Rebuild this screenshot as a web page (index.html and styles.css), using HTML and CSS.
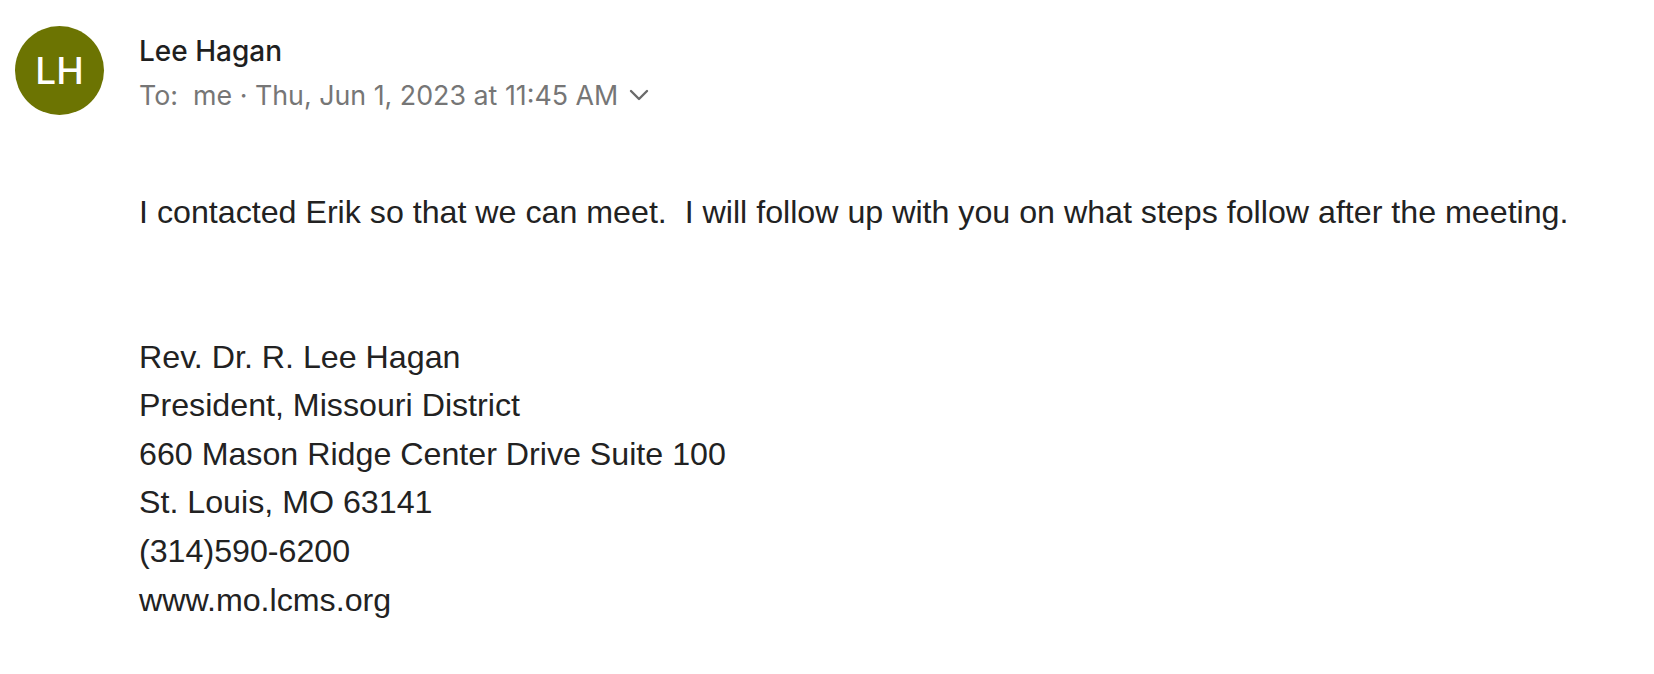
FILE: index.html
```html
<!DOCTYPE html>
<html lang="en">
<head>
<meta charset="utf-8">
<title>Lee Hagan</title>
<link rel="stylesheet" href="styles.css">
</head>
<body>
<div class="message">
  <header class="header">
    <div class="avatar">LH</div>
    <div class="meta">
      <div class="sender">Lee Hagan</div>
      <div class="recipients">
        <span>To:&nbsp; me · Thu, Jun 1, 2023 at 11:45 AM</span>
        <svg class="chevron" width="22" height="14" viewBox="0 0 22 14" aria-hidden="true"><path d="M3 3 L11 11 L19 3" fill="none" stroke="#6a6a6a" stroke-width="2.4" stroke-linecap="round" stroke-linejoin="round"/></svg>
      </div>
    </div>
  </header>
  <div class="body">
    <p class="text">I contacted Erik so that we can meet.&nbsp; I will follow up with you on what steps follow after the meeting.</p>
    <div class="signature">
      <div>Rev. Dr. R. Lee Hagan</div>
      <div>President, Missouri District</div>
      <div>660 Mason Ridge Center Drive Suite 100</div>
      <div>St. Louis, MO 63141</div>
      <div>(314)590-6200</div>
      <div>www.mo.lcms.org</div>
    </div>
  </div>
</div>
</body>
</html>
```
FILE: styles.css
```css
html, body {
  margin: 0;
  padding: 0;
  background: #ffffff;
}
.message {
  padding: 26px 0 0 15px;
}
.header {
  display: flex;
  align-items: flex-start;
  gap: 35px;
}
.avatar {
  width: 89px;
  height: 89px;
  border-radius: 50%;
  background: #6c7402;
  color: #ffffff;
  font-family: Inter, "Noto Sans", sans-serif;
  font-size: 37px;
  font-weight: 500;
  display: flex;
  align-items: center;
  justify-content: center;
  flex-shrink: 0;
}
.meta {
  padding-top: 7px;
  font-family: Inter, "Noto Sans", sans-serif;
}
.sender {
  font-size: 28px;
  line-height: 36px;
  font-weight: 500;
  color: #1f1f1f;
}
.recipients {
  margin-top: 8px;
  font-size: 26.8px;
  line-height: 36px;
  color: #767676;
  display: flex;
  align-items: center;
  gap: 10px;
}
.body {
  padding-left: 124px;
  font-family: "Liberation Sans", Arial, sans-serif;
  font-size: 32.2px;
  line-height: 48.6px;
  color: #222222;
}
.text {
  margin: 73px 0 0;
}
.signature {
  margin-top: 96px;
}
```
